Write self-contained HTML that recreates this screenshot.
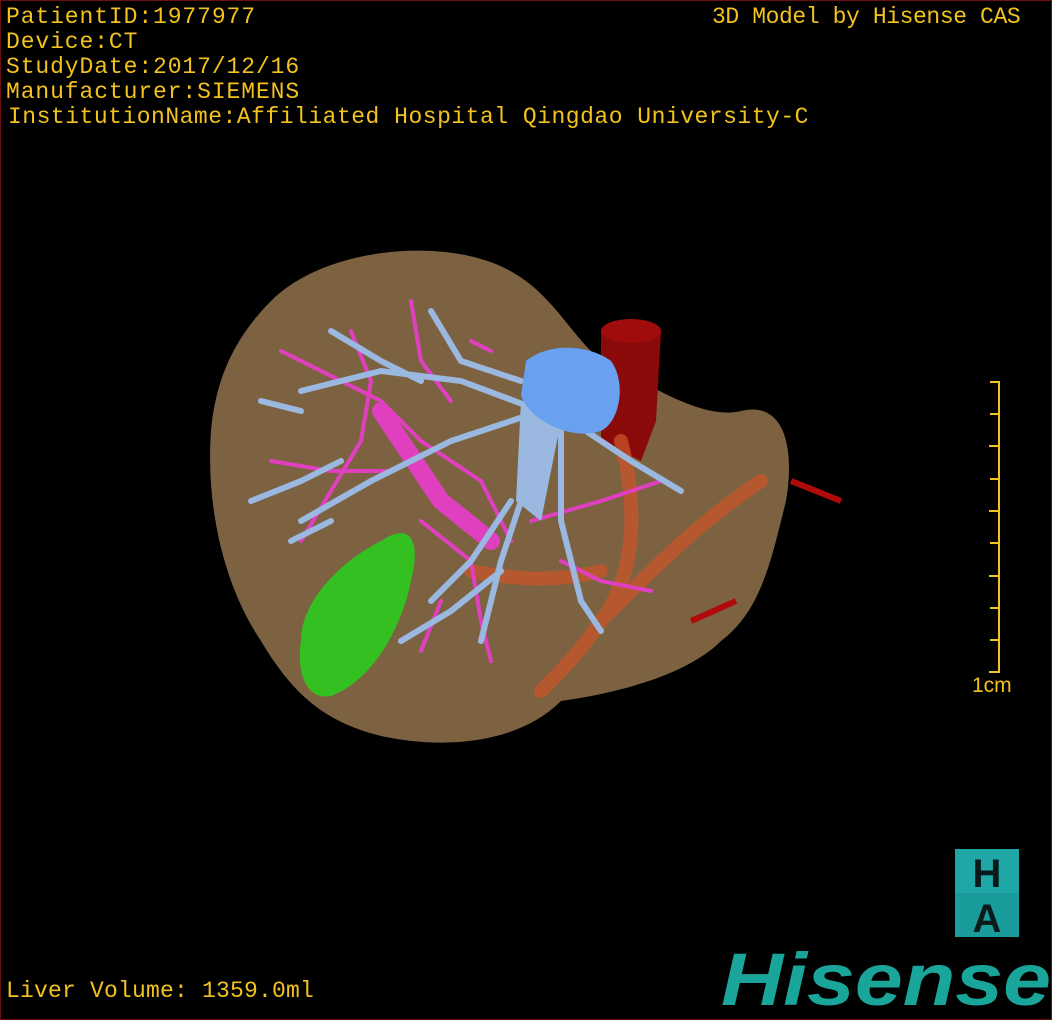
<!DOCTYPE html>
<html><head><meta charset="utf-8"><style>
html,body{margin:0;padding:0;background:#000;}
#f{position:relative;width:1050px;height:1018px;border:1px solid #6b1010;overflow:hidden;background:#000;}
.t{position:absolute;color:#f2c21e;font-family:"Liberation Mono",monospace;font-size:23px;line-height:25px;white-space:pre;}
</style></head><body><div id="f">
<svg width="1050" height="1018" style="position:absolute;left:0;top:0">
<!-- liver -->
<path d="M270 300 C320 250 420 240 480 258 C540 275 560 320 590 350 C640 380 700 420 740 410 C780 400 795 440 785 500 C770 560 760 610 720 640 C690 670 630 690 560 700 C520 740 450 750 380 735 C320 720 290 690 260 640 C220 580 205 500 210 430 C215 370 240 330 270 300 Z" fill="#7d6242"/>
<path d="M600 330 L660 330 L655 420 L640 460 L600 440 Z" fill="#8a0a0a"/>
<ellipse cx="630" cy="330" rx="30" ry="12" fill="#a00c0c"/>
<g stroke="#c8552a" stroke-width="14" fill="none" opacity="0.75" stroke-linecap="round">
<path d="M620 440 C640 520 630 580 600 620 C580 650 560 670 540 690"/>
<path d="M610 610 C660 560 700 520 760 480"/>
<path d="M470 570 C520 580 560 580 600 570"/>
</g>
<path d="M790 480 L840 500" stroke="#b00a0a" stroke-width="6"/>
<path d="M690 620 L735 600" stroke="#b00a0a" stroke-width="6"/>
<path d="M300 640 C300 600 340 560 380 540 C410 520 420 540 410 580 C400 630 370 680 330 695 C305 700 295 670 300 640 Z" fill="#33c020"/>
<g stroke="#e040c0" stroke-width="4" fill="none" stroke-linecap="round">
<path d="M280 350 L340 380 L380 400 L420 440 L480 480 L510 540"/>
<path d="M350 330 L370 380 L360 440 L330 490 L300 540"/>
<path d="M410 300 L420 360 L450 400"/>
<path d="M270 460 L330 470 L390 470"/>
<path d="M420 520 L470 560 L480 620 L490 660"/>
<path d="M530 520 L600 500 L660 480"/>
<path d="M560 560 L600 580 L650 590"/>
<path d="M440 600 L420 650"/>
<path d="M470 340 L490 350"/>
</g>
<path d="M380 410 L440 500 L490 540" stroke="#e040c0" stroke-width="18" fill="none" stroke-linecap="round"/>
<g stroke="#9ab8e0" stroke-width="6" fill="none" stroke-linecap="round">
<path d="M540 410 L460 380 L380 370 L300 390"/>
<path d="M540 410 L450 440 L370 480 L300 520"/>
<path d="M550 420 L520 500 L500 560 L480 640"/>
<path d="M560 430 L560 520 L580 600 L600 630"/>
<path d="M570 420 L630 460 L680 490"/>
<path d="M430 310 L460 360 L520 380"/>
<path d="M330 330 L380 360 L420 380"/>
<path d="M260 400 L300 410"/>
<path d="M250 500 L300 480 L340 460"/>
<path d="M290 540 L330 520"/>
<path d="M400 640 L450 610 L500 570"/>
<path d="M510 500 L470 560 L430 600"/>
</g>
<path d="M520 400 L560 420 L540 520 L515 500 Z" fill="#9ab8e0"/>
<path d="M525 360 C550 340 590 345 610 360 C625 380 620 420 600 430 C570 440 530 420 520 395 Z" fill="#6aa0f0"/>
<g stroke="#f2c21e" stroke-width="2">
<line x1="998" y1="381" x2="998" y2="671"/>
<line x1="989" y1="381" x2="999" y2="381"/><line x1="989" y1="413" x2="999" y2="413"/>
<line x1="988" y1="445" x2="999" y2="445"/><line x1="989" y1="478" x2="999" y2="478"/>
<line x1="988" y1="510" x2="999" y2="510"/><line x1="989" y1="542" x2="999" y2="542"/>
<line x1="988" y1="575" x2="999" y2="575"/><line x1="989" y1="607" x2="999" y2="607"/>
<line x1="989" y1="639" x2="999" y2="639"/><line x1="988" y1="671" x2="999" y2="671"/>
</g>
<text x="971" y="691" fill="#f2c21e" font-family="Liberation Sans,sans-serif" font-size="21">1cm</text>
<rect x="954" y="848" width="64" height="88" fill="#1fa6a6"/>
<rect x="954" y="892" width="64" height="44" fill="#1a9c9c"/>
<text x="986" y="886" text-anchor="middle" font-family="Liberation Sans,sans-serif" font-size="40" font-weight="bold" fill="#0a1a1a">H</text>
<text x="986" y="931" text-anchor="middle" font-family="Liberation Sans,sans-serif" font-size="40" font-weight="bold" fill="#0a1a1a">A</text>
<text x="720" y="1004" font-family="Liberation Sans,sans-serif" font-size="74" font-weight="bold" font-style="italic" fill="#1aa59a" textLength="330" lengthAdjust="spacingAndGlyphs">Hisense</text>
</svg>
<div class="t" style="left:5px;top:4px;letter-spacing:0.9px">PatientID:1977977</div>
<div class="t" style="left:5px;top:29px;letter-spacing:0.9px">Device:CT</div>
<div class="t" style="left:5px;top:54px;letter-spacing:0.9px">StudyDate:2017/12/16</div>
<div class="t" style="left:5px;top:79px;letter-spacing:0.9px">Manufacturer:SIEMENS</div>
<div class="t" style="left:7px;top:104px;letter-spacing:0.5px">InstitutionName:Affiliated Hospital Qingdao University-C</div>
<div class="t" style="left:711px;top:4px;letter-spacing:-0.4px">3D Model by Hisense CAS</div>
<div class="t" style="left:5px;top:978px;letter-spacing:0.2px">Liver Volume: 1359.0ml</div>
</div></body></html>
